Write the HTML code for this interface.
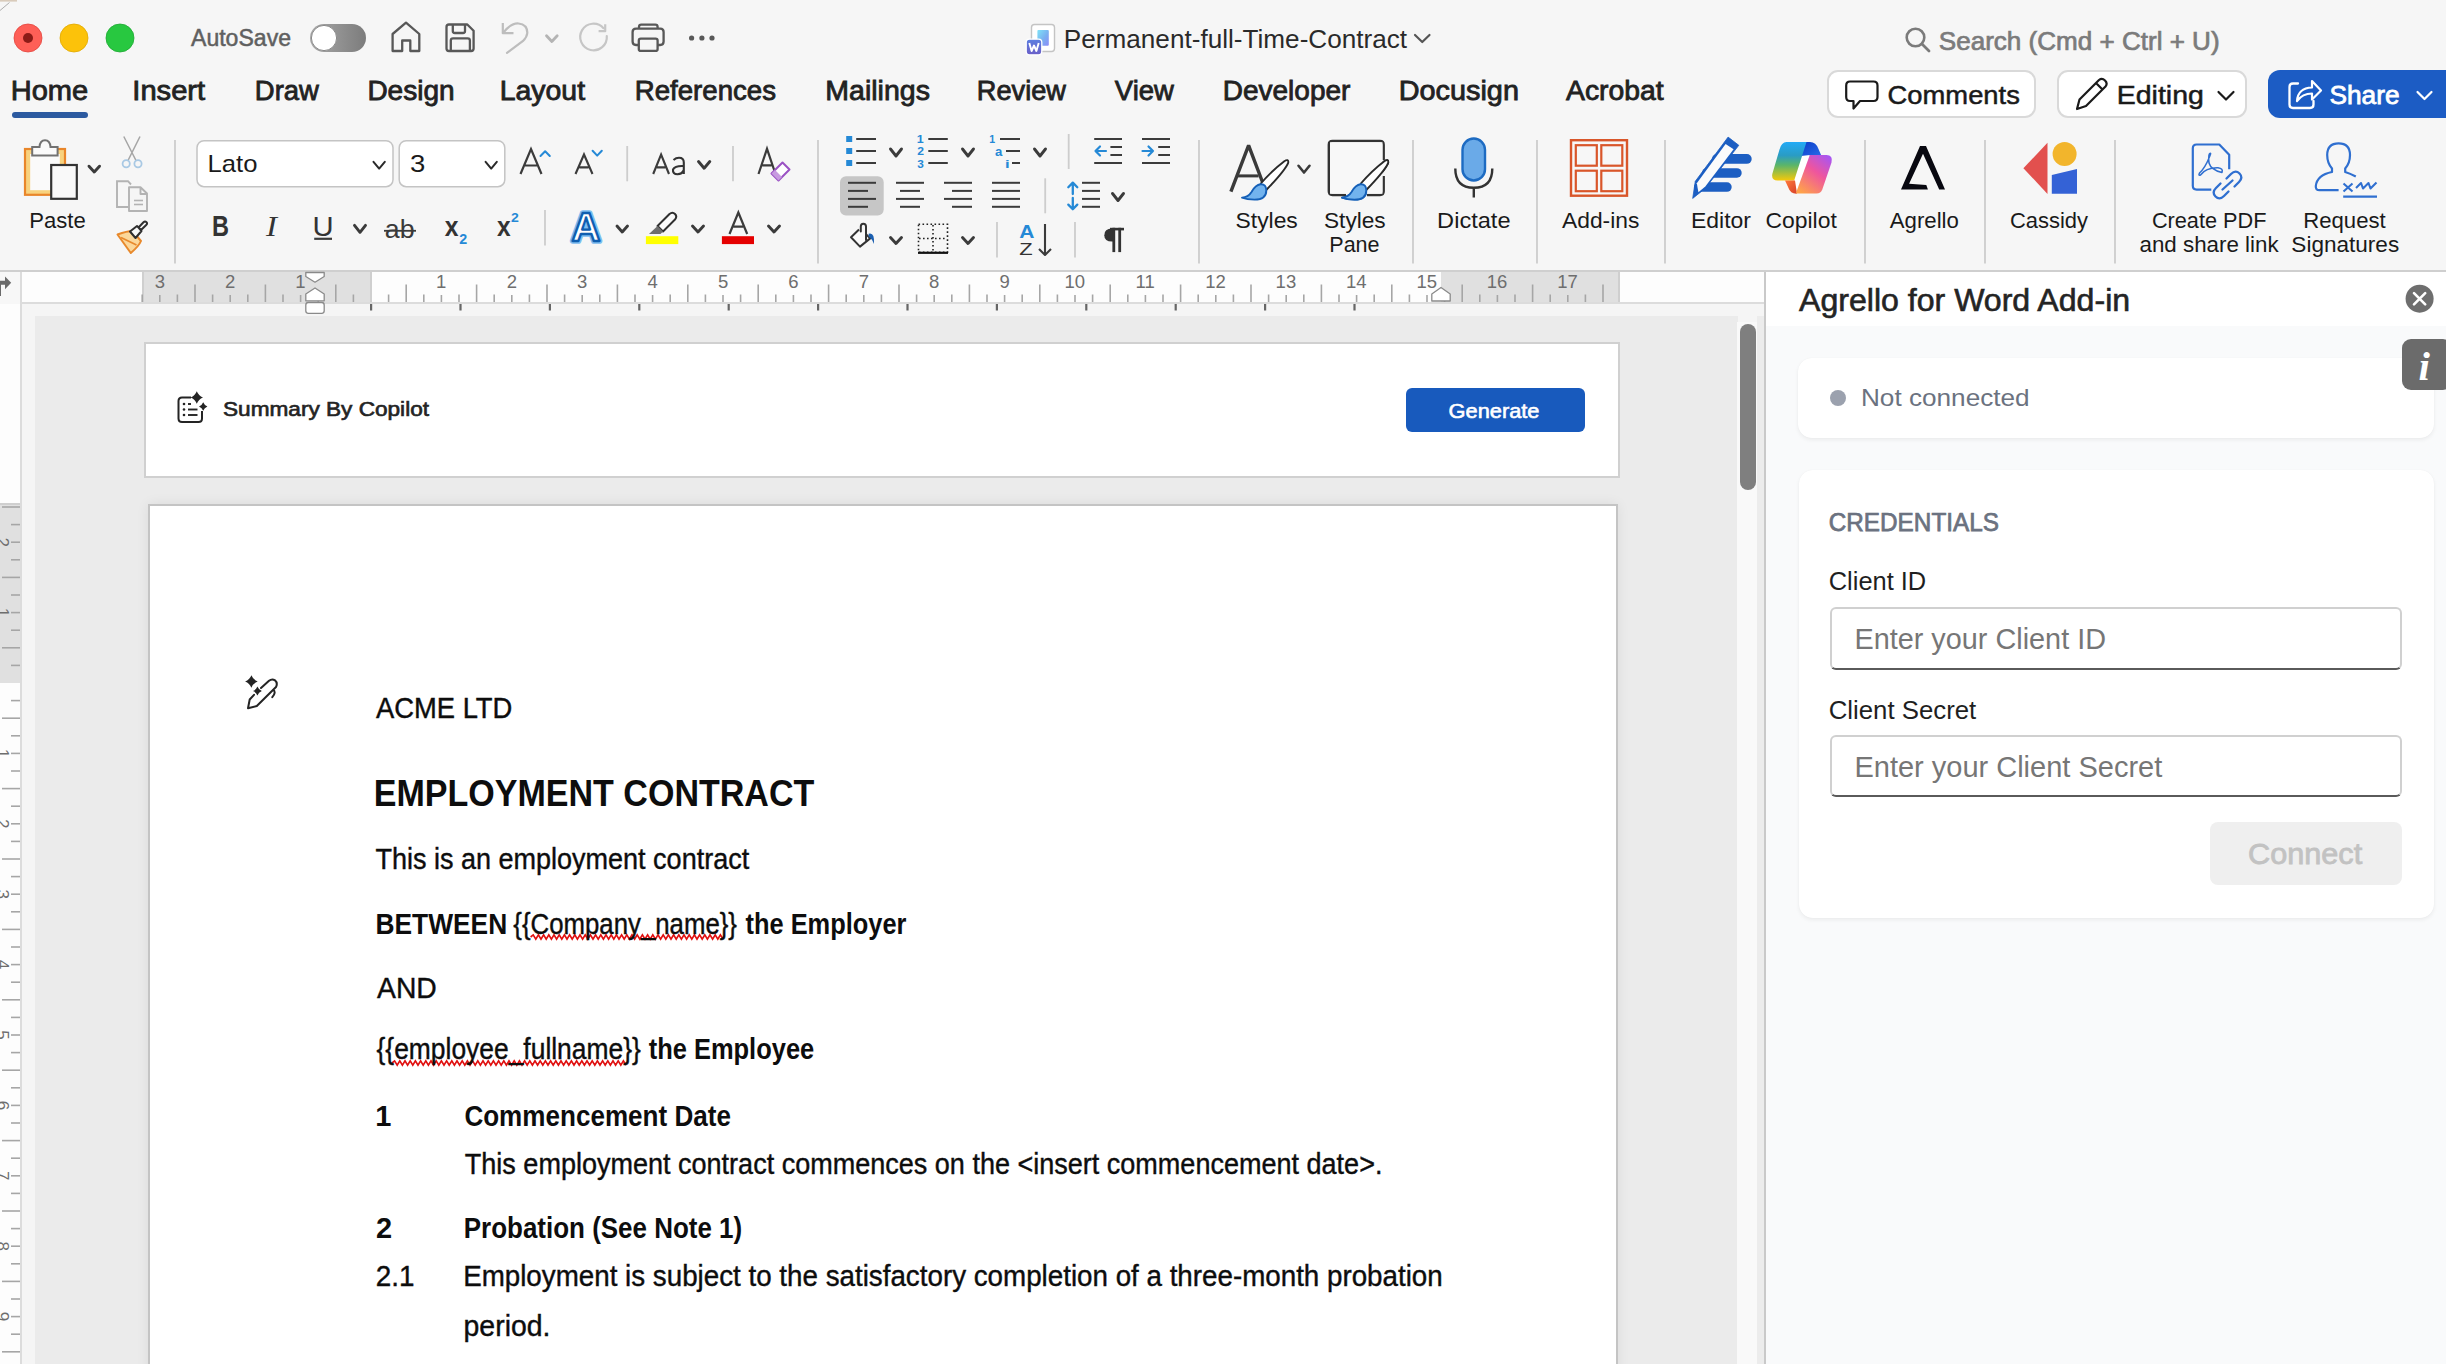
<!DOCTYPE html><html><head><meta charset="utf-8"><style>*{margin:0;padding:0}html,body{width:2446px;height:1364px;overflow:hidden;background:#f5f5f5;font-family:"Liberation Sans",sans-serif}
#w>div{position:absolute}
svg{position:absolute;left:0;top:0}</style></head><body><div id="w"><div style="left:0px;top:0px;width:2446px;height:271px;background:#f6f6f6;"></div><div style="left:0px;top:270px;width:2446px;height:2px;background:#cfcfcf;"></div><div style="left:0px;top:272px;width:20px;height:32px;background:#f7f7f7;"></div><div style="left:20px;top:272px;width:2px;height:1092px;background:#dcdcdc;"></div><div style="left:22px;top:272px;width:1743px;height:31px;background:#fdfdfd;"></div><div style="left:143px;top:272px;width:228px;height:31px;background:#e0e0e0;"></div><div style="left:142px;top:272px;width:2px;height:31px;background:#cfcfcf;"></div><div style="left:370px;top:272px;width:2px;height:31px;background:#cfcfcf;"></div><div style="left:1441px;top:272px;width:178px;height:31px;background:#e0e0e0;"></div><div style="left:1618px;top:272px;width:2px;height:31px;background:#cfcfcf;"></div><div style="left:22px;top:302px;width:1743px;height:2px;background:#dcdcdc;"></div><div style="left:22px;top:304px;width:1743px;height:12px;background:#f5f5f5;"></div><div style="left:0px;top:304px;width:20px;height:1060px;background:#fdfdfd;"></div><div style="left:0px;top:504px;width:20px;height:179px;background:#e0e0e0;"></div><div style="left:0px;top:503px;width:20px;height:2px;background:#cfcfcf;"></div><div style="left:22px;top:316px;width:13px;height:1048px;background:#f5f5f5;"></div><div style="left:35px;top:316px;width:1703px;height:1048px;background:#ebebeb;"></div><div style="left:1737px;top:322px;width:19.5px;height:1042px;background:#f9f9f9;"></div><div style="left:1756.5px;top:316px;width:7.5px;height:1048px;background:#ececec;"></div><div style="left:1764px;top:272px;width:2px;height:1092px;background:#c9c9c9;"></div><div style="left:1740px;top:324px;width:16px;height:166px;background:#7f7f7f;border-radius:8px;"></div><div style="left:144px;top:342px;width:1476px;height:136px;background:#ffffff;border:2px solid #d0d0d0;box-sizing:border-box;"></div><div style="left:148px;top:504px;width:1470px;height:900px;background:#ffffff;border:2px solid #c4c4c4;box-sizing:border-box;box-shadow:0 0 12px rgba(0,0,0,0.07);"></div><div style="left:1766px;top:272px;width:680px;height:54px;background:#ffffff;"></div><div style="left:1766px;top:326px;width:680px;height:1038px;background:#f9fafb;"></div><div style="left:1798px;top:358px;width:636px;height:80px;background:#ffffff;border-radius:14px;box-shadow:0 2px 4px rgba(0,0,0,0.06),0 0 1px rgba(0,0,0,0.05);"></div><div style="left:1799px;top:470px;width:635px;height:448px;background:#ffffff;border-radius:14px;box-shadow:0 2px 4px rgba(0,0,0,0.06),0 0 1px rgba(0,0,0,0.05);"></div><div style="left:1830px;top:606.5px;width:571.5px;height:63px;background:#ffffff;border:2px solid #d0d0d0;border-bottom-color:#5a5a5a;border-radius:6px;box-sizing:border-box;"></div><div style="left:1830px;top:734.6px;width:571.5px;height:62.5px;background:#ffffff;border:2px solid #d0d0d0;border-bottom-color:#5a5a5a;border-radius:6px;box-sizing:border-box;"></div><div style="left:2210px;top:822.3px;width:191.5px;height:63px;background:#efefef;border-radius:8px;"></div><div style="left:2402px;top:338.5px;width:50px;height:51px;background:#6b6b6b;border-radius:9px;"></div><div style="left:1826.5px;top:70px;width:209px;height:47.5px;background:#ffffff;border:2px solid #d9d9d9;border-radius:11px;box-sizing:border-box;"></div><div style="left:2057px;top:70px;width:190px;height:47.5px;background:#ffffff;border:2px solid #d9d9d9;border-radius:11px;box-sizing:border-box;"></div><div style="left:2268px;top:69.5px;width:190px;height:48.5px;background:#1c5cc4;border-radius:12px;"></div><div style="left:12px;top:112px;width:76px;height:6px;background:#2c5aa0;border-radius:3px;"></div><div style="left:1406px;top:388px;width:179px;height:44px;background:#185abd;border-radius:6px;"></div></div><svg width="2446" height="1364" viewBox="0 0 2446 1364" font-family="Liberation Sans, sans-serif"><path d="M0 0.8 L17 0.8" stroke="#d9cbbb" stroke-width="1.6"/><path d="M0 10.5 L9.5 2.5" stroke="#9a9a9a" stroke-width="0.8"/><circle cx="28" cy="38" r="14" fill="#fe5f57" stroke="#e2463f" stroke-width="0.8"/><circle cx="28" cy="38" r="5" fill="#8c1b17"/><circle cx="74" cy="38" r="14" fill="#fcc20a" stroke="#e0a800" stroke-width="0.8"/><circle cx="120" cy="38" r="14" fill="#28c840" stroke="#1fa833" stroke-width="0.8"/><defs><linearGradient id="tg" x1="0" x2="1" y1="0" y2="0"><stop offset="0" stop-color="#a8a8a8"/><stop offset="1" stop-color="#7c7c7c"/></linearGradient></defs><rect x="310" y="24" width="56" height="28" rx="14" fill="url(#tg)"/><circle cx="324" cy="38" r="12.6" fill="#ffffff" stroke="#8a8a8a" stroke-width="1"/><path d="M392.6 51 L392.6 34 L406 22.6 L419.3 34 L419.3 51 L410.3 51 L410.3 40.5 L402.2 40.5 L402.2 51 Z" fill="none" stroke="#585858" stroke-width="2.3" stroke-linejoin="round"/><path d="M449 24.5 L467.3 24.5 L473.6 30.8 L473.6 48.5 Q473.6 51 471 51 L449 51 Q446.5 51 446.5 48.5 L446.5 27 Q446.5 24.5 449 24.5 Z" fill="none" stroke="#585858" stroke-width="2.3" stroke-linejoin="round"/><path d="M452.8 24.5 L452.8 31 Q452.8 33 454.8 33 L463 33 Q465 33 465 31 L465 24.5" fill="none" stroke="#585858" stroke-width="2.3"/><path d="M450.8 51 L450.8 40.5 Q450.8 38.3 453 38.3 L467.7 38.3 Q469.9 38.3 469.9 40.5 L469.9 51" fill="none" stroke="#585858" stroke-width="2.3"/><path d="M502.8 23 L502.8 33.2 L513.5 33.2" fill="none" stroke="#bdbdbd" stroke-width="2.2" stroke-linejoin="round"/><path d="M503.5 32.5 Q511 23 518.5 23.5 Q527.5 24.5 527.3 33 Q527 37 523 41 L507 52.8" fill="none" stroke="#bdbdbd" stroke-width="2.2" stroke-linecap="round"/><path d="M546.5 35.8 L551.85 41.5 L557.2 35.8" fill="none" stroke="#b4b4b4" stroke-width="2.8" stroke-linecap="round" stroke-linejoin="round"/><path d="M603.5 28.2 A13.3 13.3 0 1 0 606.8 36" fill="none" stroke="#c6c6c6" stroke-width="2.2" stroke-linecap="round"/><path d="M605.2 24.3 L605.2 31.2 L598.6 31.2" fill="none" stroke="#c6c6c6" stroke-width="2.2" stroke-linejoin="round"/><path d="M639 28.4 L639 27 Q639 24.7 641.3 24.7 L655.3 24.7 Q657.6 24.7 657.6 27 L657.6 28.4" fill="none" stroke="#585858" stroke-width="2.3"/><path d="M638.8 45 L636 45 Q632.6 45 632.6 41.6 L632.6 32 Q632.6 28.6 636 28.6 L660.2 28.6 Q663.6 28.6 663.6 32 L663.6 41.6 Q663.6 45 660.2 45 L657.5 45" fill="none" stroke="#585858" stroke-width="2.3"/><rect x="638.8" y="38.6" width="18.8" height="12.3" rx="2" fill="none" stroke="#585858" stroke-width="2.3"/><circle cx="691.6" cy="38" r="2.6" fill="#585858"/><circle cx="701.9" cy="38" r="2.6" fill="#585858"/><circle cx="712" cy="38" r="2.6" fill="#585858"/><defs><linearGradient id="wd" x1="0" x2="1" y1="0" y2="1"><stop offset="0" stop-color="#7fe3f8"/><stop offset="0.55" stop-color="#7ab0f0"/><stop offset="1" stop-color="#8c8cf8"/></linearGradient><linearGradient id="wb" x1="0" x2="0" y1="0" y2="1"><stop offset="0" stop-color="#5d7fe0"/><stop offset="1" stop-color="#6a5fc8"/></linearGradient></defs><rect x="1031.5" y="24.5" width="23" height="27" rx="3" fill="#ffffff" stroke="#c4c4c4" stroke-width="1.4"/><rect x="1037.4" y="30" width="11.4" height="15.8" rx="1" fill="url(#wd)"/><rect x="1026.2" y="39.2" width="15.6" height="15.6" rx="3.2" fill="url(#wb)" stroke="#ffffff" stroke-width="1.3"/><path d="M1029.3 43 L1031.6 51 L1034 45.5 L1036.4 51 L1038.7 43" fill="none" stroke="#fff" stroke-width="1.9" stroke-linejoin="round"/><path d="M1415 35 L1422.25 42 L1429.5 35" fill="none" stroke="#555" stroke-width="2.2" stroke-linecap="round" stroke-linejoin="round"/><circle cx="1915.5" cy="37.5" r="8.8" fill="none" stroke="#7b7b7b" stroke-width="2.6"/><line x1="1922" y1="44" x2="1929" y2="51" stroke="#7b7b7b" stroke-width="2.8" stroke-linecap="round"/><path d="M1850 81.5 L1873.5 81.5 Q1877.5 81.5 1877.5 85.5 L1877.5 97 Q1877.5 101 1873.5 101 L1860 101 L1853.5 108.5 L1853.5 101 L1850 101 Q1846.2 101 1846.2 97 L1846.2 85.5 Q1846.2 81.5 1850 81.5 Z" fill="none" stroke="#1a1a1a" stroke-width="2.2" stroke-linejoin="round"/><path d="M2077 109 L2079.5 99.5 L2099 80 Q2102 77.5 2105 80.5 Q2108 83.5 2105.5 86.5 L2086 106 Z M2096 83 L2102.5 89.5" fill="none" stroke="#1a1a1a" stroke-width="2.2" stroke-linejoin="round"/><path d="M2218.5 92 L2226 99.5 L2233.5 92" fill="none" stroke="#1a1a1a" stroke-width="2.2" stroke-linecap="round" stroke-linejoin="round"/><path d="M2298 83.5 L2293 83.5 Q2289.5 83.5 2289.5 87 L2289.5 104.5 Q2289.5 108 2293 108 L2310 108 Q2313.5 108 2313.5 104.5 L2313.5 101" fill="none" stroke="#fff" stroke-width="2.3" stroke-linecap="round"/><path d="M2297 101 Q2298 88 2312 87.5 L2312 81 L2321 90.5 L2312 99.5 L2312 93.5 Q2302.5 93.5 2297 101 Z" fill="none" stroke="#fff" stroke-width="2.2" stroke-linejoin="round"/><path d="M2417.5 92 L2424.5 99 L2431.5 92" fill="none" stroke="#fff" stroke-width="2.2" stroke-linecap="round" stroke-linejoin="round"/><line x1="175" y1="140" x2="175" y2="263.5" stroke="#cdcdcd" stroke-width="1.8" stroke-linecap="butt"/><line x1="818" y1="140" x2="818" y2="263.5" stroke="#cdcdcd" stroke-width="1.8" stroke-linecap="butt"/><line x1="1199" y1="140" x2="1199" y2="263.5" stroke="#cdcdcd" stroke-width="1.8" stroke-linecap="butt"/><line x1="1413" y1="140" x2="1413" y2="263.5" stroke="#cdcdcd" stroke-width="1.8" stroke-linecap="butt"/><line x1="1537" y1="140" x2="1537" y2="263.5" stroke="#cdcdcd" stroke-width="1.8" stroke-linecap="butt"/><line x1="1665" y1="140" x2="1665" y2="263.5" stroke="#cdcdcd" stroke-width="1.8" stroke-linecap="butt"/><line x1="1865" y1="140" x2="1865" y2="263.5" stroke="#cdcdcd" stroke-width="1.8" stroke-linecap="butt"/><line x1="1985" y1="140" x2="1985" y2="263.5" stroke="#cdcdcd" stroke-width="1.8" stroke-linecap="butt"/><line x1="2115" y1="140" x2="2115" y2="263.5" stroke="#cdcdcd" stroke-width="1.8" stroke-linecap="butt"/><line x1="627.2" y1="146" x2="627.2" y2="181.3" stroke="#cdcdcd" stroke-width="1.8" stroke-linecap="butt"/><line x1="733" y1="146" x2="733" y2="181.3" stroke="#cdcdcd" stroke-width="1.8" stroke-linecap="butt"/><line x1="545" y1="210" x2="545" y2="245.6" stroke="#cdcdcd" stroke-width="1.8" stroke-linecap="butt"/><line x1="1068.7" y1="134" x2="1068.7" y2="169" stroke="#cdcdcd" stroke-width="1.8" stroke-linecap="butt"/><line x1="1045.2" y1="178.3" x2="1045.2" y2="213.3" stroke="#cdcdcd" stroke-width="1.8" stroke-linecap="butt"/><line x1="997" y1="222" x2="997" y2="257.5" stroke="#cdcdcd" stroke-width="1.8" stroke-linecap="butt"/><line x1="1075" y1="222" x2="1075" y2="257.5" stroke="#cdcdcd" stroke-width="1.8" stroke-linecap="butt"/><rect x="25" y="149" width="40" height="45.8" fill="#f8d27e" stroke="#e9862a" stroke-width="2.2"/><rect x="30.2" y="154" width="29.6" height="36.2" fill="#fafafa"/><path d="M32.2 155.5 L32.2 147 L39.5 147 Q40 140.2 45 140.2 Q50 140.2 50.5 147 L57.6 147 L57.6 155.5 Z" fill="#fafafa" stroke="#727272" stroke-width="2"/><rect x="51.2" y="165" width="25.6" height="33.8" fill="#f9f9f9" stroke="#333" stroke-width="2.2"/><path d="M89 166.2 L94.25 172 L99.5 166.2" fill="none" stroke="#3b3b3b" stroke-width="2.9" stroke-linecap="round" stroke-linejoin="round"/><path d="M123.8 136.5 L136 160.5 M140 136.5 L128 160.5" stroke="#a5a5a5" stroke-width="1.5" fill="none"/><circle cx="126.2" cy="163.8" r="3.6" fill="none" stroke="#a9c9e4" stroke-width="1.8"/><circle cx="138" cy="163.8" r="3.6" fill="none" stroke="#a9c9e4" stroke-width="1.8"/><path d="M128.5 207 L117 207 L117 181.2 L128 181.2 L131 184.5" fill="none" stroke="#b3b3b3" stroke-width="1.9"/><path d="M129 211 L129 187.2 L140.5 187.2 L147 193.5 L147 211 Z M140.5 187.5 L140.5 194 L147 194" fill="#f5f5f5" stroke="#b3b3b3" stroke-width="1.9" stroke-linejoin="round"/><line x1="134" y1="200.5" x2="143" y2="200.5" stroke="#b3b3b3" stroke-width="1.6" stroke-linecap="butt"/><line x1="134" y1="204.5" x2="143" y2="204.5" stroke="#b3b3b3" stroke-width="1.6" stroke-linecap="butt"/><path d="M117.5 234.5 Q127 231 132.5 231 L141 241 Q139 246 130.8 253 Z" fill="#fbd79a" stroke="#e8892c" stroke-width="2" stroke-linejoin="round"/><path d="M121 237.5 L136.5 245" stroke="#e8892c" stroke-width="1.6"/><path d="M130 231.5 L137 226 L141 230 L146.2 225 Q147.8 223.6 146.5 222.2 Q145 220.9 143.5 222.3 L138.5 227.5 L141.5 231 L135.5 238 Z" fill="#f8f8f8" stroke="#2f2f2f" stroke-width="2" stroke-linejoin="round"/><rect x="197" y="140.7" width="196" height="46" rx="7" fill="#ffffff" stroke="#c4c4c4" stroke-width="1.5"/><rect x="399.2" y="140.7" width="105.6" height="46" rx="7" fill="#ffffff" stroke="#c4c4c4" stroke-width="1.5"/><path d="M373.5 161.8 L379.15 168.6 L384.8 161.8" fill="none" stroke="#2a2a2a" stroke-width="2" stroke-linecap="round" stroke-linejoin="round"/><path d="M485.6 161.8 L491.20000000000005 168.6 L496.8 161.8" fill="none" stroke="#2a2a2a" stroke-width="2" stroke-linecap="round" stroke-linejoin="round"/><path d="M520.5 174 L531.0 149 L541.5 174 M525.07 165.5 L536.93 165.5" fill="none" stroke="#3b3b3b" stroke-width="2.2" stroke-linejoin="miter"/><path d="M540.5 156 L545.15 151.2 L549.8 156" fill="none" stroke="#2589d6" stroke-width="2" stroke-linecap="round" stroke-linejoin="round"/><path d="M575.5 174 L584.0 154.5 L592.5 174 M579.39 167.37 L588.61 167.37" fill="none" stroke="#3b3b3b" stroke-width="2.1" stroke-linejoin="miter"/><path d="M592.6 150.8 L597.2 155.6 L601.8 150.8" fill="none" stroke="#2589d6" stroke-width="2" stroke-linecap="round" stroke-linejoin="round"/><path d="M653.2 174 L661.1 154.5 L669 174 M656.8860000000001 167.37 L665.314 167.37" fill="none" stroke="#3b3b3b" stroke-width="2.1" stroke-linejoin="miter"/><path d="M673.5 160 Q676 157.8 679 157.8 Q683.8 157.8 683.8 162.5 L683.8 174 M683.8 166 Q675 165.5 673 169.5 Q672.5 174.2 677.5 174.2 Q682 174.2 683.8 170" fill="none" stroke="#333" stroke-width="2.1"/><path d="M698.5 161.5 L704.15 168.2 L709.8 161.5" fill="none" stroke="#3b3b3b" stroke-width="2.9" stroke-linecap="round" stroke-linejoin="round"/><path d="M758.5 174 L767.0 148.8 L775.5 174 M762.39 165.43200000000002 L771.61 165.43200000000002" fill="none" stroke="#3b3b3b" stroke-width="2.2" stroke-linejoin="miter"/><path d="M771.5 173.5 L782.5 162.5 L789.5 169.5 L778.5 180.5 Z" fill="#ffffff" stroke="#9b52c4" stroke-width="2" stroke-linejoin="round"/><path d="M771.5 173.5 L775 170 L782 177 L778.5 180.5 Z" fill="#c79be0"/><line x1="314.2" y1="238.8" x2="332" y2="238.8" stroke="#3b3b3b" stroke-width="2.2" stroke-linecap="butt"/><path d="M354.5 225.3 L360.0 232.3 L365.5 225.3" fill="none" stroke="#3b3b3b" stroke-width="2.9" stroke-linecap="round" stroke-linejoin="round"/><line x1="384" y1="230.8" x2="416" y2="230.8" stroke="#3b3b3b" stroke-width="1.8" stroke-linecap="butt"/><text x="571.6" y="241.2" font-size="40" font-weight="bold" fill="#ffffff" stroke="#7dbdf0" stroke-width="5.6" stroke-linejoin="round" paint-order="stroke" textLength="29" lengthAdjust="spacingAndGlyphs">A</text><text x="571.6" y="241.2" font-size="40" font-weight="bold" fill="#ffffff" stroke="#0f5eb0" stroke-width="2.3" stroke-linejoin="round" textLength="29" lengthAdjust="spacingAndGlyphs">A</text><path d="M617 226 L622.25 232 L627.5 226" fill="none" stroke="#3b3b3b" stroke-width="2.9" stroke-linecap="round" stroke-linejoin="round"/><path d="M657.5 226 L669.5 214 Q672.5 211.5 675 214 Q677.5 216.5 675 219.5 L663 231.5 Z" fill="#fafafa" stroke="#2f2f2f" stroke-width="2" stroke-linejoin="round"/><path d="M657.5 226 L663 231.5 L660.5 234 L649 234 Z" fill="#6e6e6e"/><rect x="645.9" y="236.2" width="32.4" height="7.9" fill="#ffff00"/><path d="M692.5 226 L698.0 232 L703.5 226" fill="none" stroke="#3b3b3b" stroke-width="2.9" stroke-linecap="round" stroke-linejoin="round"/><path d="M729.5 234 L738.35 212.5 L747.2 234 M733.509 226.69 L743.191 226.69" fill="none" stroke="#3b3b3b" stroke-width="2.2" stroke-linejoin="miter"/><rect x="721.9" y="236.2" width="32.1" height="7.9" fill="#e50000"/><path d="M768.5 226 L774.0 232 L779.5 226" fill="none" stroke="#3b3b3b" stroke-width="2.9" stroke-linecap="round" stroke-linejoin="round"/><rect x="846.2" y="136" width="6" height="6" fill="#2589d6"/><line x1="856.2" y1="139" x2="876" y2="139" stroke="#3b3b3b" stroke-width="2" stroke-linecap="butt"/><rect x="846.2" y="148" width="6" height="6" fill="#2589d6"/><line x1="856.2" y1="151" x2="876" y2="151" stroke="#3b3b3b" stroke-width="2" stroke-linecap="butt"/><rect x="846.2" y="160" width="6" height="6" fill="#2589d6"/><line x1="856.2" y1="163" x2="876" y2="163" stroke="#3b3b3b" stroke-width="2" stroke-linecap="butt"/><path d="M890.5 149 L896.0 156 L901.5 149" fill="none" stroke="#3b3b3b" stroke-width="2.9" stroke-linecap="round" stroke-linejoin="round"/><line x1="928.3" y1="139" x2="947.8" y2="139" stroke="#3b3b3b" stroke-width="2" stroke-linecap="butt"/><line x1="928.3" y1="151" x2="947.8" y2="151" stroke="#3b3b3b" stroke-width="2" stroke-linecap="butt"/><line x1="928.3" y1="163" x2="947.8" y2="163" stroke="#3b3b3b" stroke-width="2" stroke-linecap="butt"/><path d="M962.5 149 L968.0 156 L973.5 149" fill="none" stroke="#3b3b3b" stroke-width="2.9" stroke-linecap="round" stroke-linejoin="round"/><line x1="1000" y1="139" x2="1020" y2="139" stroke="#3b3b3b" stroke-width="2" stroke-linecap="butt"/><line x1="1006" y1="151" x2="1020" y2="151" stroke="#3b3b3b" stroke-width="2" stroke-linecap="butt"/><line x1="1012" y1="163" x2="1020" y2="163" stroke="#3b3b3b" stroke-width="2" stroke-linecap="butt"/><path d="M1034.5 149 L1040.0 156 L1045.5 149" fill="none" stroke="#3b3b3b" stroke-width="2.9" stroke-linecap="round" stroke-linejoin="round"/><line x1="1094.2" y1="139" x2="1122" y2="139" stroke="#3b3b3b" stroke-width="2" stroke-linecap="butt"/><line x1="1110.4" y1="147" x2="1122" y2="147" stroke="#3b3b3b" stroke-width="2" stroke-linecap="butt"/><line x1="1110.4" y1="155" x2="1122" y2="155" stroke="#3b3b3b" stroke-width="2" stroke-linecap="butt"/><line x1="1094.2" y1="163" x2="1122" y2="163" stroke="#3b3b3b" stroke-width="2" stroke-linecap="butt"/><path d="M1106 151 L1095.5 151 M1100 146.5 L1095.5 151 L1100 155.5" fill="none" stroke="#2589d6" stroke-width="2.2" stroke-linecap="round" stroke-linejoin="round"/><line x1="1142" y1="139" x2="1170" y2="139" stroke="#3b3b3b" stroke-width="2" stroke-linecap="butt"/><line x1="1158.2" y1="147" x2="1170" y2="147" stroke="#3b3b3b" stroke-width="2" stroke-linecap="butt"/><line x1="1158.2" y1="155" x2="1170" y2="155" stroke="#3b3b3b" stroke-width="2" stroke-linecap="butt"/><line x1="1142" y1="163" x2="1170" y2="163" stroke="#3b3b3b" stroke-width="2" stroke-linecap="butt"/><path d="M1142.5 151 L1153 151 M1148.5 146.5 L1153 151 L1148.5 155.5" fill="none" stroke="#2589d6" stroke-width="2.2" stroke-linecap="round" stroke-linejoin="round"/><rect x="840" y="176.2" width="43.7" height="39.3" rx="6" fill="#c6c6c6"/><line x1="848" y1="182.8" x2="876" y2="182.8" stroke="#3b3b3b" stroke-width="2" stroke-linecap="butt"/><line x1="848" y1="190.9" x2="868" y2="190.9" stroke="#3b3b3b" stroke-width="2" stroke-linecap="butt"/><line x1="848" y1="198.9" x2="876" y2="198.9" stroke="#3b3b3b" stroke-width="2" stroke-linecap="butt"/><line x1="848" y1="206.8" x2="868" y2="206.8" stroke="#3b3b3b" stroke-width="2" stroke-linecap="butt"/><line x1="896" y1="182.8" x2="924" y2="182.8" stroke="#3b3b3b" stroke-width="2" stroke-linecap="butt"/><line x1="900" y1="190.9" x2="920" y2="190.9" stroke="#3b3b3b" stroke-width="2" stroke-linecap="butt"/><line x1="896" y1="198.9" x2="924" y2="198.9" stroke="#3b3b3b" stroke-width="2" stroke-linecap="butt"/><line x1="900" y1="206.8" x2="920" y2="206.8" stroke="#3b3b3b" stroke-width="2" stroke-linecap="butt"/><line x1="944" y1="182.8" x2="972" y2="182.8" stroke="#3b3b3b" stroke-width="2" stroke-linecap="butt"/><line x1="952" y1="190.9" x2="972" y2="190.9" stroke="#3b3b3b" stroke-width="2" stroke-linecap="butt"/><line x1="944" y1="198.9" x2="972" y2="198.9" stroke="#3b3b3b" stroke-width="2" stroke-linecap="butt"/><line x1="952" y1="206.8" x2="972" y2="206.8" stroke="#3b3b3b" stroke-width="2" stroke-linecap="butt"/><line x1="992" y1="182.8" x2="1020" y2="182.8" stroke="#3b3b3b" stroke-width="2" stroke-linecap="butt"/><line x1="992" y1="190.9" x2="1020" y2="190.9" stroke="#3b3b3b" stroke-width="2" stroke-linecap="butt"/><line x1="992" y1="198.9" x2="1020" y2="198.9" stroke="#3b3b3b" stroke-width="2" stroke-linecap="butt"/><line x1="992" y1="206.8" x2="1020" y2="206.8" stroke="#3b3b3b" stroke-width="2" stroke-linecap="butt"/><line x1="1082" y1="182.8" x2="1100" y2="182.8" stroke="#3b3b3b" stroke-width="2" stroke-linecap="butt"/><line x1="1082" y1="190.9" x2="1100" y2="190.9" stroke="#3b3b3b" stroke-width="2" stroke-linecap="butt"/><line x1="1082" y1="198.9" x2="1100" y2="198.9" stroke="#3b3b3b" stroke-width="2" stroke-linecap="butt"/><line x1="1082" y1="206.8" x2="1100" y2="206.8" stroke="#3b3b3b" stroke-width="2" stroke-linecap="butt"/><path d="M1072.8 183 L1072.8 194 M1068.3 187.2 L1072.8 182.6 L1077.3 187.2 M1072.8 198 L1072.8 209 M1068.3 204.6 L1072.8 209.2 L1077.3 204.6" fill="none" stroke="#2589d6" stroke-width="2.3" stroke-linecap="round" stroke-linejoin="round"/><path d="M1112.5 193.5 L1118.0 200.5 L1123.5 193.5" fill="none" stroke="#3b3b3b" stroke-width="2.9" stroke-linecap="round" stroke-linejoin="round"/><path d="M859 229.5 L851 237.2 L860 246.6 L870.2 238.4 L866 234.2" fill="#fafafa" stroke="#333" stroke-width="2" stroke-linejoin="round"/><path d="M866 240 L866 226.6 Q866 223.8 863.3 223.8 Q860.8 223.8 860.8 226.6 L860.8 231.5" fill="none" stroke="#333" stroke-width="2" stroke-linecap="round"/><path d="M868.6 233.8 Q874.8 232 874 244 Q872 239 868.6 236.6 Z" fill="#1b5fb0"/><path d="M890.5 237.5 L896.0 243.5 L901.5 237.5" fill="none" stroke="#3b3b3b" stroke-width="2.9" stroke-linecap="round" stroke-linejoin="round"/><rect x="918.5" y="224.3" width="29" height="28" fill="none" stroke="#222" stroke-width="1.6" stroke-dasharray="1.6 2.4"/><path d="M933 225 L933 252 M919 238.5 L947 238.5" fill="none" stroke="#222" stroke-width="1.6" stroke-dasharray="1.6 2.4"/><line x1="918" y1="252.8" x2="948" y2="252.8" stroke="#111" stroke-width="2.2" stroke-linecap="butt"/><path d="M962.5 237.5 L968.0 243.5 L973.5 237.5" fill="none" stroke="#3b3b3b" stroke-width="2.9" stroke-linecap="round" stroke-linejoin="round"/><path d="M1045 224 L1045 255 M1039 249 L1045 255 L1051 249" fill="none" stroke="#3b3b3b" stroke-width="2.1" stroke-linejoin="round"/><path d="M1230.9 191.6 L1248.6 145.4 L1264 186" fill="none" stroke="#3a3a3a" stroke-width="3.4" stroke-linejoin="bevel"/><line x1="1237" y1="175.9" x2="1258.6" y2="175.9" stroke="#3a3a3a" stroke-width="3" stroke-linecap="butt"/><path d="M1260.4 184 Q1272 170.5 1284.3 161.2 Q1288.8 158.4 1288.2 162.8 Q1285 170.5 1266.2 190" fill="#ffffff" stroke="#2a2a2a" stroke-width="1.9" stroke-linejoin="round"/><path d="M1242 197.6 Q1248 197.5 1251.5 192 Q1255.5 184.8 1260.5 184.2 Q1266.3 183.8 1266.3 190.5 Q1266.3 199.6 1254.5 199.6 Q1247 199.6 1242 197.6 Z" fill="#72b3ee" stroke="#1560b8" stroke-width="1.9" stroke-linejoin="round"/><path d="M1360.4 184 Q1372 170.5 1384.3 161.2 Q1388.8 158.4 1388.2 162.8 Q1385 170.5 1366.2 190" fill="#ffffff" stroke="#2a2a2a" stroke-width="1.9" stroke-linejoin="round"/><path d="M1342 197.6 Q1348 197.5 1351.5 192 Q1355.5 184.8 1360.5 184.2 Q1366.3 183.8 1366.3 190.5 Q1366.3 199.6 1354.5 199.6 Q1347 199.6 1342 197.6 Z" fill="#72b3ee" stroke="#1560b8" stroke-width="1.9" stroke-linejoin="round"/><path d="M1298.5 165.8 L1304.0 172.5 L1309.5 165.8" fill="none" stroke="#3a3a3a" stroke-width="2.6" stroke-linecap="round" stroke-linejoin="round"/><path d="M1346 195 L1332.5 195 Q1328.8 195 1328.8 191.3 L1328.8 144.7 Q1328.8 141 1332.5 141 L1380 141 Q1383.7 141 1383.7 144.7 L1383.7 160 M1383.7 176 L1383.7 191.3 Q1383.7 195 1380 195 L1367 195" fill="none" stroke="#333" stroke-width="2.4"/><rect x="1330" y="142.2" width="52.5" height="51.6" fill="#f8f8f8"/><path d="M1360.4 184 Q1372 170.5 1384.3 161.2 Q1388.8 158.4 1388.2 162.8 Q1385 170.5 1366.2 190" fill="#ffffff" stroke="#2a2a2a" stroke-width="1.9" stroke-linejoin="round"/><path d="M1342 197.6 Q1348 197.5 1351.5 192 Q1355.5 184.8 1360.5 184.2 Q1366.3 183.8 1366.3 190.5 Q1366.3 199.6 1354.5 199.6 Q1347 199.6 1342 197.6 Z" fill="#72b3ee" stroke="#1560b8" stroke-width="1.9" stroke-linejoin="round"/><rect x="1462.5" y="138.5" width="22.5" height="42" rx="11.25" fill="#6aaae8" stroke="#1d6bc2" stroke-width="2.4"/><path d="M1455.3 168.5 Q1455.3 187.8 1473.8 187.8 Q1492.3 187.8 1492.3 168.5 M1473.8 187.8 L1473.8 197.5" fill="none" stroke="#333" stroke-width="2.4"/><rect x="1571" y="140.2" width="56" height="55.5" fill="#f7f7f7" stroke="#d9562a" stroke-width="2.4"/><rect x="1575.8" y="145.2" width="21" height="20.5" fill="none" stroke="#d9562a" stroke-width="2.2"/><rect x="1575.8" y="170.7" width="21" height="20.5" fill="none" stroke="#d9562a" stroke-width="2.2"/><rect x="1601.3" y="145.2" width="21" height="20.5" fill="none" stroke="#d9562a" stroke-width="2.2"/><rect x="1601.3" y="170.7" width="21" height="20.5" fill="none" stroke="#d9562a" stroke-width="2.2"/><rect x="1712" y="154.1" width="39.7" height="9.7" rx="4.85" fill="#1c5ec2"/><rect x="1702" y="168.2" width="39.7" height="9.5" rx="4.75" fill="#1c5ec2"/><rect x="1694" y="182.3" width="37.7" height="9.5" rx="4.75" fill="#1c5ec2"/><path d="M1692.7 198.4 L1695.3 181.3 L1728.1 137.1 L1738.8 145.3 L1705.2 188.4 Z" fill="#1c5ec2" stroke="#1c5ec2" stroke-width="0.8" stroke-linejoin="round"/><path d="M1725.6 143.9 L1733.6 149.3 L1705.3 186.6 L1698.4 192.3 L1696.8 183.2 Z" fill="#fbfbfb"/><defs><linearGradient id="cpl" x1="0" x2="0" y1="0" y2="1"><stop offset="0" stop-color="#22aaf6"/><stop offset="0.35" stop-color="#2a9cc4"/><stop offset="0.6" stop-color="#5ab56a"/><stop offset="1" stop-color="#f5c90a"/></linearGradient><linearGradient id="cpr" x1="0.9" x2="0.2" y1="0" y2="1"><stop offset="0" stop-color="#a655f5"/><stop offset="0.45" stop-color="#ee559e"/><stop offset="1" stop-color="#ffa24a"/></linearGradient><linearGradient id="cpt" x1="0" x2="1" y1="0" y2="1"><stop offset="0" stop-color="#0a3ec8"/><stop offset="1" stop-color="#2a6ae8"/></linearGradient><linearGradient id="cpb" x1="0" x2="1" y1="0" y2="1"><stop offset="0" stop-color="#ff7a3a"/><stop offset="1" stop-color="#d8402a"/></linearGradient></defs><path d="M1804 142 L1810 142 Q1816 142 1818.5 149 L1821.5 156 L1801 156 Z" fill="url(#cpt)"/><path d="M1801 156 L1810 155 L1796.5 193.6 L1793.5 180.5 Z" fill="#ffffff"/><path d="M1786.5 142 L1806.5 142 L1794.2 180.5 L1777.5 180.5 Q1771.2 180.5 1772.3 174 L1779.5 149.5 Q1781.5 142 1786.5 142 Z" fill="url(#cpl)"/><path d="M1785 180.5 L1795 180.5 L1797 193.6 Q1790.5 194 1788.5 188 Z" fill="url(#cpb)"/><path d="M1809.8 155 L1826.5 155 Q1833.2 155 1831.5 162.5 L1822.3 189.5 Q1820.8 193.6 1816.5 193.6 L1795.8 193.6 Z" fill="url(#cpr)"/><path d="M1920 146 L1926 146 L1945 189.4 L1939.2 189.4 L1923 153.7 L1909.1 183.8 L1926.3 185 L1927.9 189.4 L1901 189.4 Z" fill="#080810"/><path d="M2023.4 168.2 L2047.5 142.8 L2047.5 193.9 Z" fill="#e2504e"/><circle cx="2064.6" cy="154" r="12" fill="#f2b52c"/><path d="M2051.8 175 L2077 169 L2077 193.8 L2051.8 193.8 Z" fill="#3462d6"/><path d="M2211.3 189.6 L2196.6 189.6 Q2192.8 189.6 2192.8 185.8 L2192.8 148.3 Q2192.8 144.5 2196.6 144.5 L2219.3 144.5 L2229.2 154.7 L2229.2 169.3" fill="none" stroke="#2f6fd0" stroke-width="2.2" stroke-linejoin="round"/><path d="M2210.5 153.3 Q2208 153.3 2209 163 Q2211 170 2222 172.5 Q2223.5 168.5 2218 167.8 Q2206 167.5 2200.5 175 Q2198 176 2199.5 173 Q2205 168 2209 158 Q2211 153.3 2210.5 153.3 Z" fill="none" stroke="#2f6fd0" stroke-width="1.5" stroke-linejoin="round"/><path d="M2226.5 178.5 L2231 174 Q2235.5 169.5 2239.5 173.5 Q2243.5 177.5 2239 182 L2234.5 186.5" fill="none" stroke="#2f6fd0" stroke-width="2.3" stroke-linecap="round"/><path d="M2228.5 191.5 L2224 196 Q2219.5 200.5 2215.5 196.5 Q2211.5 192.5 2216 188 L2220.5 183.5" fill="none" stroke="#2f6fd0" stroke-width="2.3" stroke-linecap="round"/><path d="M2222.5 189.5 L2232.5 180.5" fill="none" stroke="#2f6fd0" stroke-width="2.3" stroke-linecap="round"/><path d="M2338.6 190.2 L2319.5 190.2 Q2315.5 190.2 2315.8 186 Q2317 175 2332 172 L2332 168.5 Q2327.2 163 2327.2 155 Q2327.2 143.3 2338.6 143.3 Q2350 143.3 2350 155 Q2350 163 2345.2 168.5 L2345.2 172 Q2350 173.5 2355.8 176.5" fill="none" stroke="#2f6fd0" stroke-width="2.2" stroke-linejoin="round"/><path d="M2343.5 183.5 L2352.5 191.5 M2352.5 183.5 L2343.5 191.5" stroke="#2f6fd0" stroke-width="2.1"/><path d="M2356 188 L2361 183 L2363 188.5 L2368.5 183 L2370.5 188.5 L2376.5 182.5" fill="none" stroke="#2f6fd0" stroke-width="2.1" stroke-linejoin="round"/><line x1="2343.2" y1="196.6" x2="2377" y2="196.6" stroke="#2f6fd0" stroke-width="2.2" stroke-linecap="butt"/><line x1="142.2" y1="294.5" x2="142.2" y2="302" stroke="#a6a6a6" stroke-width="1.6"/><line x1="177.4" y1="294.5" x2="177.4" y2="302" stroke="#a6a6a6" stroke-width="1.6"/><line x1="195.0" y1="284.5" x2="195.0" y2="302" stroke="#a6a6a6" stroke-width="1.6"/><line x1="212.6" y1="294.5" x2="212.6" y2="302" stroke="#a6a6a6" stroke-width="1.6"/><line x1="247.8" y1="294.5" x2="247.8" y2="302" stroke="#a6a6a6" stroke-width="1.6"/><line x1="265.4" y1="284.5" x2="265.4" y2="302" stroke="#a6a6a6" stroke-width="1.6"/><line x1="283.0" y1="294.5" x2="283.0" y2="302" stroke="#a6a6a6" stroke-width="1.6"/><line x1="318.2" y1="294.5" x2="318.2" y2="302" stroke="#a6a6a6" stroke-width="1.6"/><line x1="335.8" y1="284.5" x2="335.8" y2="302" stroke="#a6a6a6" stroke-width="1.6"/><line x1="353.4" y1="294.5" x2="353.4" y2="302" stroke="#a6a6a6" stroke-width="1.6"/><line x1="388.6" y1="294.5" x2="388.6" y2="302" stroke="#a6a6a6" stroke-width="1.6"/><line x1="406.2" y1="284.5" x2="406.2" y2="302" stroke="#a6a6a6" stroke-width="1.6"/><line x1="423.8" y1="294.5" x2="423.8" y2="302" stroke="#a6a6a6" stroke-width="1.6"/><line x1="459.0" y1="294.5" x2="459.0" y2="302" stroke="#a6a6a6" stroke-width="1.6"/><line x1="476.6" y1="284.5" x2="476.6" y2="302" stroke="#a6a6a6" stroke-width="1.6"/><line x1="494.2" y1="294.5" x2="494.2" y2="302" stroke="#a6a6a6" stroke-width="1.6"/><line x1="529.4" y1="294.5" x2="529.4" y2="302" stroke="#a6a6a6" stroke-width="1.6"/><line x1="547.0" y1="284.5" x2="547.0" y2="302" stroke="#a6a6a6" stroke-width="1.6"/><line x1="564.6" y1="294.5" x2="564.6" y2="302" stroke="#a6a6a6" stroke-width="1.6"/><line x1="599.8" y1="294.5" x2="599.8" y2="302" stroke="#a6a6a6" stroke-width="1.6"/><line x1="617.4" y1="284.5" x2="617.4" y2="302" stroke="#a6a6a6" stroke-width="1.6"/><line x1="635.0" y1="294.5" x2="635.0" y2="302" stroke="#a6a6a6" stroke-width="1.6"/><line x1="670.2" y1="294.5" x2="670.2" y2="302" stroke="#a6a6a6" stroke-width="1.6"/><line x1="687.8" y1="284.5" x2="687.8" y2="302" stroke="#a6a6a6" stroke-width="1.6"/><line x1="705.4" y1="294.5" x2="705.4" y2="302" stroke="#a6a6a6" stroke-width="1.6"/><line x1="740.6" y1="294.5" x2="740.6" y2="302" stroke="#a6a6a6" stroke-width="1.6"/><line x1="758.2" y1="284.5" x2="758.2" y2="302" stroke="#a6a6a6" stroke-width="1.6"/><line x1="775.8" y1="294.5" x2="775.8" y2="302" stroke="#a6a6a6" stroke-width="1.6"/><line x1="811.0" y1="294.5" x2="811.0" y2="302" stroke="#a6a6a6" stroke-width="1.6"/><line x1="828.6" y1="284.5" x2="828.6" y2="302" stroke="#a6a6a6" stroke-width="1.6"/><line x1="846.2" y1="294.5" x2="846.2" y2="302" stroke="#a6a6a6" stroke-width="1.6"/><line x1="881.4" y1="294.5" x2="881.4" y2="302" stroke="#a6a6a6" stroke-width="1.6"/><line x1="899.0" y1="284.5" x2="899.0" y2="302" stroke="#a6a6a6" stroke-width="1.6"/><line x1="916.6" y1="294.5" x2="916.6" y2="302" stroke="#a6a6a6" stroke-width="1.6"/><line x1="951.8" y1="294.5" x2="951.8" y2="302" stroke="#a6a6a6" stroke-width="1.6"/><line x1="969.4" y1="284.5" x2="969.4" y2="302" stroke="#a6a6a6" stroke-width="1.6"/><line x1="987.0" y1="294.5" x2="987.0" y2="302" stroke="#a6a6a6" stroke-width="1.6"/><line x1="1022.2" y1="294.5" x2="1022.2" y2="302" stroke="#a6a6a6" stroke-width="1.6"/><line x1="1039.8" y1="284.5" x2="1039.8" y2="302" stroke="#a6a6a6" stroke-width="1.6"/><line x1="1057.4" y1="294.5" x2="1057.4" y2="302" stroke="#a6a6a6" stroke-width="1.6"/><line x1="1092.6" y1="294.5" x2="1092.6" y2="302" stroke="#a6a6a6" stroke-width="1.6"/><line x1="1110.2" y1="284.5" x2="1110.2" y2="302" stroke="#a6a6a6" stroke-width="1.6"/><line x1="1127.8" y1="294.5" x2="1127.8" y2="302" stroke="#a6a6a6" stroke-width="1.6"/><line x1="1163.0" y1="294.5" x2="1163.0" y2="302" stroke="#a6a6a6" stroke-width="1.6"/><line x1="1180.6" y1="284.5" x2="1180.6" y2="302" stroke="#a6a6a6" stroke-width="1.6"/><line x1="1198.2" y1="294.5" x2="1198.2" y2="302" stroke="#a6a6a6" stroke-width="1.6"/><line x1="1233.4" y1="294.5" x2="1233.4" y2="302" stroke="#a6a6a6" stroke-width="1.6"/><line x1="1251.0" y1="284.5" x2="1251.0" y2="302" stroke="#a6a6a6" stroke-width="1.6"/><line x1="1268.6" y1="294.5" x2="1268.6" y2="302" stroke="#a6a6a6" stroke-width="1.6"/><line x1="1303.8" y1="294.5" x2="1303.8" y2="302" stroke="#a6a6a6" stroke-width="1.6"/><line x1="1321.4" y1="284.5" x2="1321.4" y2="302" stroke="#a6a6a6" stroke-width="1.6"/><line x1="1339.0" y1="294.5" x2="1339.0" y2="302" stroke="#a6a6a6" stroke-width="1.6"/><line x1="1374.2" y1="294.5" x2="1374.2" y2="302" stroke="#a6a6a6" stroke-width="1.6"/><line x1="1391.8" y1="284.5" x2="1391.8" y2="302" stroke="#a6a6a6" stroke-width="1.6"/><line x1="1409.4" y1="294.5" x2="1409.4" y2="302" stroke="#a6a6a6" stroke-width="1.6"/><line x1="1444.6" y1="294.5" x2="1444.6" y2="302" stroke="#a6a6a6" stroke-width="1.6"/><line x1="1462.2" y1="284.5" x2="1462.2" y2="302" stroke="#a6a6a6" stroke-width="1.6"/><line x1="1479.8" y1="294.5" x2="1479.8" y2="302" stroke="#a6a6a6" stroke-width="1.6"/><line x1="1515.0" y1="294.5" x2="1515.0" y2="302" stroke="#a6a6a6" stroke-width="1.6"/><line x1="1532.6" y1="284.5" x2="1532.6" y2="302" stroke="#a6a6a6" stroke-width="1.6"/><line x1="1550.2" y1="294.5" x2="1550.2" y2="302" stroke="#a6a6a6" stroke-width="1.6"/><line x1="1585.4" y1="294.5" x2="1585.4" y2="302" stroke="#a6a6a6" stroke-width="1.6"/><line x1="1603.0" y1="284.5" x2="1603.0" y2="302" stroke="#a6a6a6" stroke-width="1.6"/><line x1="159.8" y1="295" x2="159.8" y2="302" stroke="#a6a6a6" stroke-width="1.6"/><line x1="230.2" y1="295" x2="230.2" y2="302" stroke="#a6a6a6" stroke-width="1.6"/><line x1="300.6" y1="295" x2="300.6" y2="302" stroke="#a6a6a6" stroke-width="1.6"/><line x1="441.4" y1="295" x2="441.4" y2="302" stroke="#a6a6a6" stroke-width="1.6"/><line x1="511.8" y1="295" x2="511.8" y2="302" stroke="#a6a6a6" stroke-width="1.6"/><line x1="582.2" y1="295" x2="582.2" y2="302" stroke="#a6a6a6" stroke-width="1.6"/><line x1="652.6" y1="295" x2="652.6" y2="302" stroke="#a6a6a6" stroke-width="1.6"/><line x1="723.0" y1="295" x2="723.0" y2="302" stroke="#a6a6a6" stroke-width="1.6"/><line x1="793.4" y1="295" x2="793.4" y2="302" stroke="#a6a6a6" stroke-width="1.6"/><line x1="863.8" y1="295" x2="863.8" y2="302" stroke="#a6a6a6" stroke-width="1.6"/><line x1="934.2" y1="295" x2="934.2" y2="302" stroke="#a6a6a6" stroke-width="1.6"/><line x1="1004.6" y1="295" x2="1004.6" y2="302" stroke="#a6a6a6" stroke-width="1.6"/><line x1="1075.0" y1="295" x2="1075.0" y2="302" stroke="#a6a6a6" stroke-width="1.6"/><line x1="1145.4" y1="295" x2="1145.4" y2="302" stroke="#a6a6a6" stroke-width="1.6"/><line x1="1215.8" y1="295" x2="1215.8" y2="302" stroke="#a6a6a6" stroke-width="1.6"/><line x1="1286.2" y1="295" x2="1286.2" y2="302" stroke="#a6a6a6" stroke-width="1.6"/><line x1="1356.6" y1="295" x2="1356.6" y2="302" stroke="#a6a6a6" stroke-width="1.6"/><line x1="1427.0" y1="295" x2="1427.0" y2="302" stroke="#a6a6a6" stroke-width="1.6"/><line x1="1497.4" y1="295" x2="1497.4" y2="302" stroke="#a6a6a6" stroke-width="1.6"/><line x1="1567.8" y1="295" x2="1567.8" y2="302" stroke="#a6a6a6" stroke-width="1.6"/><rect x="370.0" y="304" width="2.2" height="6.5" fill="#666"/><rect x="459.4" y="304" width="2.2" height="6.5" fill="#666"/><rect x="548.8" y="304" width="2.2" height="6.5" fill="#666"/><rect x="638.2" y="304" width="2.2" height="6.5" fill="#666"/><rect x="727.6" y="304" width="2.2" height="6.5" fill="#666"/><rect x="817.0" y="304" width="2.2" height="6.5" fill="#666"/><rect x="906.4" y="304" width="2.2" height="6.5" fill="#666"/><rect x="995.8" y="304" width="2.2" height="6.5" fill="#666"/><rect x="1085.2" y="304" width="2.2" height="6.5" fill="#666"/><rect x="1174.6" y="304" width="2.2" height="6.5" fill="#666"/><rect x="1264.0" y="304" width="2.2" height="6.5" fill="#666"/><rect x="1353.4" y="304" width="2.2" height="6.5" fill="#666"/><path d="M305.8 272.5 L324.2 272.5 L324.2 276.5 L315 282.2 L305.8 276.5 Z" fill="#ffffff" stroke="#8a8a8a" stroke-width="1.3" stroke-linejoin="round"/><path d="M315 288 L324.2 294 L324.2 300.8 L305.8 300.8 L305.8 294 Z" fill="#ffffff" stroke="#8a8a8a" stroke-width="1.3" stroke-linejoin="round"/><rect x="305.8" y="302.5" width="18.4" height="10.8" rx="2.5" fill="#ffffff" stroke="#8a8a8a" stroke-width="1.3" stroke-linejoin="round"/><path d="M1441 287.5 L1450.2 294 L1450.2 301 L1431.8 301 L1431.8 294 Z" fill="#ffffff" stroke="#8a8a8a" stroke-width="1.3" stroke-linejoin="round"/><path d="M-1 296 L-1 282.8 L6 282.8" fill="none" stroke="#6a6a6a" stroke-width="4"/><path d="M5 276.5 L11.2 282.8 L5 289.2 Z" fill="#6a6a6a"/><line x1="2" y1="507.0" x2="20" y2="507.0" stroke="#a6a6a6" stroke-width="1.6"/><line x1="11" y1="524.6" x2="20" y2="524.6" stroke="#a6a6a6" stroke-width="1.6"/><line x1="11" y1="559.8" x2="20" y2="559.8" stroke="#a6a6a6" stroke-width="1.6"/><line x1="2" y1="577.4" x2="20" y2="577.4" stroke="#a6a6a6" stroke-width="1.6"/><line x1="11" y1="595.0" x2="20" y2="595.0" stroke="#a6a6a6" stroke-width="1.6"/><line x1="11" y1="630.2" x2="20" y2="630.2" stroke="#a6a6a6" stroke-width="1.6"/><line x1="2" y1="647.8" x2="20" y2="647.8" stroke="#a6a6a6" stroke-width="1.6"/><line x1="11" y1="665.4" x2="20" y2="665.4" stroke="#a6a6a6" stroke-width="1.6"/><line x1="11" y1="700.6" x2="20" y2="700.6" stroke="#a6a6a6" stroke-width="1.6"/><line x1="2" y1="718.2" x2="20" y2="718.2" stroke="#a6a6a6" stroke-width="1.6"/><line x1="11" y1="735.8" x2="20" y2="735.8" stroke="#a6a6a6" stroke-width="1.6"/><line x1="11" y1="771.0" x2="20" y2="771.0" stroke="#a6a6a6" stroke-width="1.6"/><line x1="2" y1="788.6" x2="20" y2="788.6" stroke="#a6a6a6" stroke-width="1.6"/><line x1="11" y1="806.2" x2="20" y2="806.2" stroke="#a6a6a6" stroke-width="1.6"/><line x1="11" y1="841.4" x2="20" y2="841.4" stroke="#a6a6a6" stroke-width="1.6"/><line x1="2" y1="859.0" x2="20" y2="859.0" stroke="#a6a6a6" stroke-width="1.6"/><line x1="11" y1="876.6" x2="20" y2="876.6" stroke="#a6a6a6" stroke-width="1.6"/><line x1="11" y1="911.8" x2="20" y2="911.8" stroke="#a6a6a6" stroke-width="1.6"/><line x1="2" y1="929.4" x2="20" y2="929.4" stroke="#a6a6a6" stroke-width="1.6"/><line x1="11" y1="947.0" x2="20" y2="947.0" stroke="#a6a6a6" stroke-width="1.6"/><line x1="11" y1="982.2" x2="20" y2="982.2" stroke="#a6a6a6" stroke-width="1.6"/><line x1="2" y1="999.8" x2="20" y2="999.8" stroke="#a6a6a6" stroke-width="1.6"/><line x1="11" y1="1017.4" x2="20" y2="1017.4" stroke="#a6a6a6" stroke-width="1.6"/><line x1="11" y1="1052.6" x2="20" y2="1052.6" stroke="#a6a6a6" stroke-width="1.6"/><line x1="2" y1="1070.2" x2="20" y2="1070.2" stroke="#a6a6a6" stroke-width="1.6"/><line x1="11" y1="1087.8" x2="20" y2="1087.8" stroke="#a6a6a6" stroke-width="1.6"/><line x1="11" y1="1123.0" x2="20" y2="1123.0" stroke="#a6a6a6" stroke-width="1.6"/><line x1="2" y1="1140.6" x2="20" y2="1140.6" stroke="#a6a6a6" stroke-width="1.6"/><line x1="11" y1="1158.2" x2="20" y2="1158.2" stroke="#a6a6a6" stroke-width="1.6"/><line x1="11" y1="1193.4" x2="20" y2="1193.4" stroke="#a6a6a6" stroke-width="1.6"/><line x1="2" y1="1211.0" x2="20" y2="1211.0" stroke="#a6a6a6" stroke-width="1.6"/><line x1="11" y1="1228.6" x2="20" y2="1228.6" stroke="#a6a6a6" stroke-width="1.6"/><line x1="11" y1="1263.8" x2="20" y2="1263.8" stroke="#a6a6a6" stroke-width="1.6"/><line x1="2" y1="1281.4" x2="20" y2="1281.4" stroke="#a6a6a6" stroke-width="1.6"/><line x1="11" y1="1299.0" x2="20" y2="1299.0" stroke="#a6a6a6" stroke-width="1.6"/><line x1="11" y1="1334.2" x2="20" y2="1334.2" stroke="#a6a6a6" stroke-width="1.6"/><line x1="2" y1="1351.8" x2="20" y2="1351.8" stroke="#a6a6a6" stroke-width="1.6"/><line x1="11" y1="542.2" x2="20" y2="542.2" stroke="#a6a6a6" stroke-width="1.6"/><text x="0" y="0" font-size="17" fill="#6e6e6e" text-anchor="middle" transform="translate(-3 542.2) rotate(90)">2</text><line x1="11" y1="612.6" x2="20" y2="612.6" stroke="#a6a6a6" stroke-width="1.6"/><text x="0" y="0" font-size="17" fill="#6e6e6e" text-anchor="middle" transform="translate(-3 612.6) rotate(90)">1</text><line x1="11" y1="753.4" x2="20" y2="753.4" stroke="#a6a6a6" stroke-width="1.6"/><text x="0" y="0" font-size="17" fill="#6e6e6e" text-anchor="middle" transform="translate(-3 753.4) rotate(90)">1</text><line x1="11" y1="823.8" x2="20" y2="823.8" stroke="#a6a6a6" stroke-width="1.6"/><text x="0" y="0" font-size="17" fill="#6e6e6e" text-anchor="middle" transform="translate(-3 823.8) rotate(90)">2</text><line x1="11" y1="894.2" x2="20" y2="894.2" stroke="#a6a6a6" stroke-width="1.6"/><text x="0" y="0" font-size="17" fill="#6e6e6e" text-anchor="middle" transform="translate(-3 894.2) rotate(90)">3</text><line x1="11" y1="964.6" x2="20" y2="964.6" stroke="#a6a6a6" stroke-width="1.6"/><text x="0" y="0" font-size="17" fill="#6e6e6e" text-anchor="middle" transform="translate(-3 964.6) rotate(90)">4</text><line x1="11" y1="1035.0" x2="20" y2="1035.0" stroke="#a6a6a6" stroke-width="1.6"/><text x="0" y="0" font-size="17" fill="#6e6e6e" text-anchor="middle" transform="translate(-3 1035.0) rotate(90)">5</text><line x1="11" y1="1105.4" x2="20" y2="1105.4" stroke="#a6a6a6" stroke-width="1.6"/><text x="0" y="0" font-size="17" fill="#6e6e6e" text-anchor="middle" transform="translate(-3 1105.4) rotate(90)">6</text><line x1="11" y1="1175.8" x2="20" y2="1175.8" stroke="#a6a6a6" stroke-width="1.6"/><text x="0" y="0" font-size="17" fill="#6e6e6e" text-anchor="middle" transform="translate(-3 1175.8) rotate(90)">7</text><line x1="11" y1="1246.2" x2="20" y2="1246.2" stroke="#a6a6a6" stroke-width="1.6"/><text x="0" y="0" font-size="17" fill="#6e6e6e" text-anchor="middle" transform="translate(-3 1246.2) rotate(90)">8</text><line x1="11" y1="1316.6" x2="20" y2="1316.6" stroke="#a6a6a6" stroke-width="1.6"/><text x="0" y="0" font-size="17" fill="#6e6e6e" text-anchor="middle" transform="translate(-3 1316.6) rotate(90)">9</text><path d="M198 397.5 L182 397.5 Q178.5 397.5 178.5 401 L178.5 418.5 Q178.5 422 182 422 L198.5 422 Q202 422 202 418.5 L202 411" fill="none" stroke="#242424" stroke-width="2"/><circle cx="184" cy="404" r="1.3" fill="#242424"/><circle cx="184" cy="409.5" r="1.3" fill="#242424"/><circle cx="184" cy="415" r="1.3" fill="#242424"/><line x1="188" y1="404" x2="195.5" y2="404" stroke="#242424" stroke-width="1.9" stroke-linecap="butt"/><line x1="188" y1="409.5" x2="197.5" y2="409.5" stroke="#242424" stroke-width="1.9" stroke-linecap="butt"/><line x1="188" y1="415" x2="197.5" y2="415" stroke="#242424" stroke-width="1.9" stroke-linecap="butt"/><rect x="191" y="390" width="17" height="18" fill="#ffffff"/><path d="M196.8 391.3 Q198.536 395.764 203.0 397.5 Q198.536 399.236 196.8 403.7 Q195.06400000000002 399.236 190.60000000000002 397.5 Q195.06400000000002 395.764 196.8 391.3 Z" fill="#242424"/><path d="M203.2 402.3 Q204.37599999999998 405.324 207.39999999999998 406.5 Q204.37599999999998 407.676 203.2 410.7 Q202.024 407.676 199.0 406.5 Q202.024 405.324 203.2 402.3 Z" fill="#242424"/><path d="M251.4 675.2 Q253.16400000000002 679.736 257.7 681.5 Q253.16400000000002 683.264 251.4 687.8 Q249.636 683.264 245.1 681.5 Q249.636 679.736 251.4 675.2 Z" fill="#242424"/><path d="M257.4 686.6 Q258.632 689.768 261.79999999999995 691 Q258.632 692.232 257.4 695.4 Q256.16799999999995 692.232 252.99999999999997 691 Q256.16799999999995 689.768 257.4 686.6 Z" fill="#242424"/><path d="M261 688 L269 680.8 Q272 678.3 275 680.3 Q278 683 276 687 L256.8 706 L248 708.2 L249.7 699.5 L254 694.8 M273.2 689.6 Q276.5 692.5 272.3 697.2" fill="none" stroke="#242424" stroke-width="2" stroke-linecap="round" stroke-linejoin="round"/><path d="M530.6 937 L533.2 934.9 L535.8 939.1 L538.4 934.9 L541.0 939.1 L543.6 934.9 L546.2 939.1 L548.8 934.9 L551.4 939.1 L554.0 934.9 L556.6 939.1 L559.2 934.9 L561.8 939.1 L564.4 934.9 L567.0 939.1 L569.6 934.9 L572.2 939.1 L574.8 934.9 L577.4 939.1 L580.0 934.9 L582.6 939.1 L585.2 934.9 L587.8 939.1 L590.4 934.9 L593.0 939.1 L595.6 934.9 L598.2 939.1 L600.8 934.9 L603.4 939.1 L606.0 934.9 L608.6 939.1 L611.2 934.9 L613.8 939.1 L616.4 934.9 L619.0 939.1 L621.6 934.9 L624.2 939.1 L626.8 934.9 L629.4 939.1 L632.0 934.9 L634.6 939.1 L637.2 934.9 L639.8 939.1 L642.4 934.9 L645.0 939.1 L647.6 934.9 L650.2 939.1 L652.8 934.9 L655.4 939.1 L658.0 934.9 L660.6 939.1 L663.2 934.9 L665.8 939.1 L668.4 934.9 L671.0 939.1 L673.6 934.9 L676.2 939.1 L678.8 934.9 L681.4 939.1 L684.0 934.9 L686.6 939.1 L689.2 934.9 L691.8 939.1 L694.4 934.9 L697.0 939.1 L699.6 934.9 L702.2 939.1 L704.8 934.9 L707.4 939.1 L710.0 934.9 L712.6 939.1 L715.2 934.9 L717.8 939.1 L720.4 934.9 L723.0 939.1" fill="none" stroke="#e01010" stroke-width="1.7"/><path d="M392 1063 L394.6 1060.9 L397.2 1065.1 L399.8 1060.9 L402.4 1065.1 L405.0 1060.9 L407.6 1065.1 L410.2 1060.9 L412.8 1065.1 L415.4 1060.9 L418.0 1065.1 L420.6 1060.9 L423.2 1065.1 L425.8 1060.9 L428.4 1065.1 L431.0 1060.9 L433.6 1065.1 L436.2 1060.9 L438.8 1065.1 L441.4 1060.9 L444.0 1065.1 L446.6 1060.9 L449.2 1065.1 L451.8 1060.9 L454.4 1065.1 L457.0 1060.9 L459.6 1065.1 L462.2 1060.9 L464.8 1065.1 L467.4 1060.9 L470.0 1065.1 L472.6 1060.9 L475.2 1065.1 L477.8 1060.9 L480.4 1065.1 L483.0 1060.9 L485.6 1065.1 L488.2 1060.9 L490.8 1065.1 L493.4 1060.9 L496.0 1065.1 L498.6 1060.9 L501.2 1065.1 L503.8 1060.9 L506.4 1065.1 L509.0 1060.9 L511.6 1065.1 L514.2 1060.9 L516.8 1065.1 L519.4 1060.9 L522.0 1065.1 L524.6 1060.9 L527.2 1065.1 L529.8 1060.9 L532.4 1065.1 L535.0 1060.9 L537.6 1065.1 L540.2 1060.9 L542.8 1065.1 L545.4 1060.9 L548.0 1065.1 L550.6 1060.9 L553.2 1065.1 L555.8 1060.9 L558.4 1065.1 L561.0 1060.9 L563.6 1065.1 L566.2 1060.9 L568.8 1065.1 L571.4 1060.9 L574.0 1065.1 L576.6 1060.9 L579.2 1065.1 L581.8 1060.9 L584.4 1065.1 L587.0 1060.9 L589.6 1065.1 L592.2 1060.9 L594.8 1065.1 L597.4 1060.9 L600.0 1065.1 L602.6 1060.9 L605.2 1065.1 L607.8 1060.9 L610.4 1065.1 L613.0 1060.9 L615.6 1065.1 L618.2 1060.9 L620.8 1065.1 L623.4 1060.9 L626.0 1065.1" fill="none" stroke="#e01010" stroke-width="1.7"/><circle cx="2419.6" cy="298.7" r="14" fill="#6e6e6e"/><path d="M2414 293.1 L2425.2 304.3 M2425.2 293.1 L2414 304.3" stroke="#fff" stroke-width="2.6" stroke-linecap="round"/><circle cx="1838" cy="398" r="8" fill="#9ba1ae"/><text x="2418.5" y="379.5" font-family="Liberation Serif, serif" font-weight="bold" font-style="italic" font-size="41" fill="#ffffff">i</text><text x="1887.58" y="103.70" font-size="26.5" font-weight="normal" font-style="normal" fill="#1a1a1a" stroke="#1a1a1a" stroke-width="0.5" textLength="132.31" lengthAdjust="spacingAndGlyphs">Comments</text><text x="2116.71" y="103.70" font-size="26.5" font-weight="normal" font-style="normal" fill="#1a1a1a" stroke="#1a1a1a" stroke-width="0.5" textLength="87.20" lengthAdjust="spacingAndGlyphs">Editing</text><text x="2329.46" y="103.70" font-size="26.5" font-weight="normal" font-style="normal" fill="#ffffff" stroke="#ffffff" stroke-width="0.8" textLength="70.02" lengthAdjust="spacingAndGlyphs">Share</text><text x="29.24" y="227.60" font-size="22" font-weight="normal" font-style="normal" fill="#1a1a1a" textLength="56.47" lengthAdjust="spacingAndGlyphs">Paste</text><text x="1235.56" y="228.00" font-size="22" font-weight="normal" font-style="normal" fill="#1a1a1a" textLength="62.26" lengthAdjust="spacingAndGlyphs">Styles</text><text x="1323.97" y="228.00" font-size="22" font-weight="normal" font-style="normal" fill="#1a1a1a" textLength="61.74" lengthAdjust="spacingAndGlyphs">Styles</text><text x="1329.29" y="252.00" font-size="22" font-weight="normal" font-style="normal" fill="#1a1a1a" textLength="50.30" lengthAdjust="spacingAndGlyphs">Pane</text><text x="1437.12" y="228.00" font-size="22" font-weight="normal" font-style="normal" fill="#1a1a1a" textLength="73.42" lengthAdjust="spacingAndGlyphs">Dictate</text><text x="1562.00" y="228.00" font-size="22" font-weight="normal" font-style="normal" fill="#1a1a1a" textLength="77.35" lengthAdjust="spacingAndGlyphs">Add-ins</text><text x="1690.97" y="228.00" font-size="22" font-weight="normal" font-style="normal" fill="#1a1a1a" textLength="59.99" lengthAdjust="spacingAndGlyphs">Editor</text><text x="1765.53" y="228.00" font-size="22" font-weight="normal" font-style="normal" fill="#1a1a1a" textLength="71.29" lengthAdjust="spacingAndGlyphs">Copilot</text><text x="1889.80" y="228.00" font-size="22" font-weight="normal" font-style="normal" fill="#1a1a1a" textLength="69.07" lengthAdjust="spacingAndGlyphs">Agrello</text><text x="2009.88" y="228.00" font-size="22" font-weight="normal" font-style="normal" fill="#1a1a1a" textLength="78.12" lengthAdjust="spacingAndGlyphs">Cassidy</text><text x="2151.89" y="228.00" font-size="22" font-weight="normal" font-style="normal" fill="#1a1a1a" textLength="114.58" lengthAdjust="spacingAndGlyphs">Create PDF</text><text x="2139.51" y="252.00" font-size="22" font-weight="normal" font-style="normal" fill="#1a1a1a" textLength="139.07" lengthAdjust="spacingAndGlyphs">and share link</text><text x="2303.24" y="228.00" font-size="22" font-weight="normal" font-style="normal" fill="#1a1a1a" textLength="82.43" lengthAdjust="spacingAndGlyphs">Request</text><text x="2291.37" y="252.00" font-size="22" font-weight="normal" font-style="normal" fill="#1a1a1a" textLength="107.85" lengthAdjust="spacingAndGlyphs">Signatures</text><text x="207.50" y="171.70" font-size="24" font-weight="normal" font-style="normal" fill="#1a1a1a" textLength="49.93" lengthAdjust="spacingAndGlyphs">Lato</text><text x="410.00" y="171.70" font-size="24" font-weight="normal" font-style="normal" fill="#1a1a1a" textLength="15.32" lengthAdjust="spacingAndGlyphs">3</text><text x="211.88" y="236.00" font-size="29" font-weight="bold" font-style="normal" fill="#333333" textLength="16.99" lengthAdjust="spacingAndGlyphs">B</text><text x="265.94" y="236.00" font-size="29" font-weight="normal" font-style="italic" font-family="Liberation Serif, serif" fill="#333333" textLength="10.98" lengthAdjust="spacingAndGlyphs">I</text><text x="312.58" y="236.00" font-size="28" font-weight="normal" font-style="normal" fill="#333333" textLength="21.11" lengthAdjust="spacingAndGlyphs">U</text><text x="384.84" y="237.50" font-size="26" font-weight="normal" font-style="normal" fill="#3a3a3a" textLength="29.73" lengthAdjust="spacingAndGlyphs">ab</text><text x="444.77" y="236.00" font-size="27" font-weight="bold" font-style="normal" fill="#333333" textLength="13.77" lengthAdjust="spacingAndGlyphs">x</text><text x="459.22" y="244.00" font-size="15" font-weight="bold" font-style="normal" fill="#2589d6" textLength="7.94" lengthAdjust="spacingAndGlyphs">2</text><text x="496.97" y="236.00" font-size="27" font-weight="bold" font-style="normal" fill="#333333" textLength="13.67" lengthAdjust="spacingAndGlyphs">x</text><text x="511.01" y="221.70" font-size="13.5" font-weight="bold" font-style="normal" fill="#2589d6" textLength="7.82" lengthAdjust="spacingAndGlyphs">2</text><text x="916.82" y="143.00" font-size="10" font-weight="bold" font-style="normal" fill="#2589d6" textLength="6.91" lengthAdjust="spacingAndGlyphs">1</text><text x="917.15" y="155.00" font-size="10" font-weight="bold" font-style="normal" fill="#2589d6" textLength="6.73" lengthAdjust="spacingAndGlyphs">2</text><text x="917.31" y="167.50" font-size="10" font-weight="bold" font-style="normal" fill="#2589d6" textLength="6.56" lengthAdjust="spacingAndGlyphs">3</text><text x="989.34" y="143.00" font-size="10" font-weight="bold" font-style="normal" fill="#2589d6" textLength="5.86" lengthAdjust="spacingAndGlyphs">1</text><text x="995.09" y="155.50" font-size="12" font-weight="bold" font-style="normal" fill="#2589d6" textLength="7.33" lengthAdjust="spacingAndGlyphs">a</text><text x="1004.96" y="167.50" font-size="10" font-weight="bold" font-style="normal" fill="#2589d6" textLength="4.63" lengthAdjust="spacingAndGlyphs">i</text><text x="1019.32" y="237.60" font-size="18" font-weight="bold" font-style="normal" fill="#2589d6" textLength="15.17" lengthAdjust="spacingAndGlyphs">A</text><text x="1019.25" y="255.30" font-size="17" font-weight="normal" font-style="normal" fill="#333333" textLength="13.40" lengthAdjust="spacingAndGlyphs">Z</text><path d="M1114.5 228.6 L1112 228.6 Q1104.3 228.6 1104.3 235.2 Q1104.3 241.6 1112 241.6 L1114.5 241.6 Z" fill="#333"/><rect x="1112.4" y="227.8" width="2.8" height="24.3" fill="#333"/><rect x="1118.3" y="227.8" width="2.8" height="24.3" fill="#333"/><rect x="1110" y="227.8" width="14" height="2.6" fill="#333"/><text x="295.2" y="287.6" font-size="18.5" fill="#6e6e6e">1</text><text x="225.1" y="287.6" font-size="18.5" fill="#6e6e6e">2</text><text x="154.7" y="287.6" font-size="18.5" fill="#6e6e6e">3</text><text x="436.0" y="287.6" font-size="18.5" fill="#6e6e6e">1</text><text x="506.7" y="287.6" font-size="18.5" fill="#6e6e6e">2</text><text x="577.1" y="287.6" font-size="18.5" fill="#6e6e6e">3</text><text x="647.5" y="287.6" font-size="18.5" fill="#6e6e6e">4</text><text x="717.9" y="287.6" font-size="18.5" fill="#6e6e6e">5</text><text x="788.2" y="287.6" font-size="18.5" fill="#6e6e6e">6</text><text x="858.7" y="287.6" font-size="18.5" fill="#6e6e6e">7</text><text x="929.1" y="287.6" font-size="18.5" fill="#6e6e6e">8</text><text x="999.4" y="287.6" font-size="18.5" fill="#6e6e6e">9</text><text x="1064.4" y="287.6" font-size="18.5" fill="#6e6e6e">10</text><text x="1135.6" y="287.6" font-size="18.5" fill="#6e6e6e">11</text><text x="1205.3" y="287.6" font-size="18.5" fill="#6e6e6e">12</text><text x="1275.6" y="287.6" font-size="18.5" fill="#6e6e6e">13</text><text x="1345.9" y="287.6" font-size="18.5" fill="#6e6e6e">14</text><text x="1416.4" y="287.6" font-size="18.5" fill="#6e6e6e">15</text><text x="1486.8" y="287.6" font-size="18.5" fill="#6e6e6e">16</text><text x="1557.3" y="287.6" font-size="18.5" fill="#6e6e6e">17</text><text x="191.00" y="46.00" font-size="23" font-weight="normal" font-style="normal" fill="#606060" stroke="#606060" stroke-width="0.5" textLength="99.99" lengthAdjust="spacingAndGlyphs">AutoSave</text><text x="1063.86" y="47.50" font-size="26" font-weight="normal" font-style="normal" fill="#2a2a2a" textLength="343.25" lengthAdjust="spacingAndGlyphs">Permanent-full-Time-Contract</text><text x="1938.83" y="50.00" font-size="25" font-weight="normal" font-style="normal" fill="#7b7b7b" stroke="#7b7b7b" stroke-width="0.7" textLength="280.75" lengthAdjust="spacingAndGlyphs">Search (Cmd + Ctrl + U)</text><text x="10.71" y="100.00" font-size="27" font-weight="normal" font-style="normal" fill="#222222" stroke="#222222" stroke-width="0.8" textLength="77.52" lengthAdjust="spacingAndGlyphs">Home</text><text x="132.30" y="100.00" font-size="27" font-weight="normal" font-style="normal" fill="#222222" stroke="#222222" stroke-width="0.8" textLength="72.86" lengthAdjust="spacingAndGlyphs">Insert</text><text x="254.84" y="100.00" font-size="27" font-weight="normal" font-style="normal" fill="#222222" stroke="#222222" stroke-width="0.8" textLength="64.04" lengthAdjust="spacingAndGlyphs">Draw</text><text x="367.40" y="100.00" font-size="27" font-weight="normal" font-style="normal" fill="#222222" stroke="#222222" stroke-width="0.8" textLength="87.16" lengthAdjust="spacingAndGlyphs">Design</text><text x="499.76" y="100.00" font-size="27" font-weight="normal" font-style="normal" fill="#222222" stroke="#222222" stroke-width="0.8" textLength="85.30" lengthAdjust="spacingAndGlyphs">Layout</text><text x="634.83" y="100.00" font-size="27" font-weight="normal" font-style="normal" fill="#222222" stroke="#222222" stroke-width="0.8" textLength="141.14" lengthAdjust="spacingAndGlyphs">References</text><text x="825.36" y="100.00" font-size="27" font-weight="normal" font-style="normal" fill="#222222" stroke="#222222" stroke-width="0.8" textLength="104.53" lengthAdjust="spacingAndGlyphs">Mailings</text><text x="976.86" y="100.00" font-size="27" font-weight="normal" font-style="normal" fill="#222222" stroke="#222222" stroke-width="0.8" textLength="89.04" lengthAdjust="spacingAndGlyphs">Review</text><text x="1114.87" y="100.00" font-size="27" font-weight="normal" font-style="normal" fill="#222222" stroke="#222222" stroke-width="0.8" textLength="59.03" lengthAdjust="spacingAndGlyphs">View</text><text x="1222.80" y="100.00" font-size="27" font-weight="normal" font-style="normal" fill="#222222" stroke="#222222" stroke-width="0.8" textLength="127.53" lengthAdjust="spacingAndGlyphs">Developer</text><text x="1398.73" y="100.00" font-size="27" font-weight="normal" font-style="normal" fill="#222222" stroke="#222222" stroke-width="0.8" textLength="120.20" lengthAdjust="spacingAndGlyphs">Docusign</text><text x="1566.00" y="100.00" font-size="27" font-weight="normal" font-style="normal" fill="#222222" stroke="#222222" stroke-width="0.8" textLength="97.68" lengthAdjust="spacingAndGlyphs">Acrobat</text><text x="376.00" y="718.00" font-size="29" font-weight="normal" font-style="normal" fill="#0d0d0d" stroke="#0d0d0d" stroke-width="0.4" textLength="136.28" lengthAdjust="spacingAndGlyphs">ACME LTD</text><text x="373.75" y="806.00" font-size="36" font-weight="bold" font-style="normal" fill="#0d0d0d" textLength="440.58" lengthAdjust="spacingAndGlyphs">EMPLOYMENT CONTRACT</text><text x="375.42" y="869.00" font-size="29" font-weight="normal" font-style="normal" fill="#0d0d0d" stroke="#0d0d0d" stroke-width="0.4" textLength="373.78" lengthAdjust="spacingAndGlyphs">This is an employment contract</text><text x="375.50" y="933.50" font-size="29" font-weight="bold" font-style="normal" fill="#0d0d0d" textLength="131.72" lengthAdjust="spacingAndGlyphs">BETWEEN</text><text x="513.36" y="933.50" font-size="29" font-weight="normal" font-style="normal" fill="#0d0d0d" stroke="#0d0d0d" stroke-width="0.4" textLength="223.61" lengthAdjust="spacingAndGlyphs">{{Company_name}}</text><text x="745.47" y="933.50" font-size="29" font-weight="bold" font-style="normal" fill="#0d0d0d" textLength="160.94" lengthAdjust="spacingAndGlyphs">the Employer</text><text x="377.00" y="997.60" font-size="29" font-weight="normal" font-style="normal" fill="#0d0d0d" stroke="#0d0d0d" stroke-width="0.4" textLength="59.82" lengthAdjust="spacingAndGlyphs">AND</text><text x="376.54" y="1059.40" font-size="29" font-weight="normal" font-style="normal" fill="#0d0d0d" stroke="#0d0d0d" stroke-width="0.4" textLength="264.30" lengthAdjust="spacingAndGlyphs">{{employee_fullname}}</text><text x="648.67" y="1059.40" font-size="29" font-weight="bold" font-style="normal" fill="#0d0d0d" textLength="165.56" lengthAdjust="spacingAndGlyphs">the Employee</text><text x="375.25" y="1125.80" font-size="29" font-weight="bold" font-style="normal" fill="#0d0d0d" textLength="16.13" lengthAdjust="spacingAndGlyphs">1</text><text x="464.39" y="1125.80" font-size="29" font-weight="bold" font-style="normal" fill="#0d0d0d" textLength="266.54" lengthAdjust="spacingAndGlyphs">Commencement Date</text><text x="464.82" y="1174.30" font-size="29" font-weight="normal" font-style="normal" fill="#0d0d0d" stroke="#0d0d0d" stroke-width="0.4" textLength="917.61" lengthAdjust="spacingAndGlyphs">This employment contract commences on the &lt;insert commencement date&gt;.</text><text x="376.00" y="1237.60" font-size="29" font-weight="bold" font-style="normal" fill="#0d0d0d" textLength="16.13" lengthAdjust="spacingAndGlyphs">2</text><text x="463.72" y="1237.60" font-size="29" font-weight="bold" font-style="normal" fill="#0d0d0d" textLength="278.51" lengthAdjust="spacingAndGlyphs">Probation (See Note 1)</text><text x="375.68" y="1285.80" font-size="29" font-weight="normal" font-style="normal" fill="#0d0d0d" stroke="#0d0d0d" stroke-width="0.4" textLength="38.70" lengthAdjust="spacingAndGlyphs">2.1</text><text x="463.13" y="1285.80" font-size="29" font-weight="normal" font-style="normal" fill="#0d0d0d" stroke="#0d0d0d" stroke-width="0.4" textLength="979.63" lengthAdjust="spacingAndGlyphs">Employment is subject to the satisfactory completion of a three-month probation</text><text x="463.56" y="1335.50" font-size="29" font-weight="normal" font-style="normal" fill="#0d0d0d" stroke="#0d0d0d" stroke-width="0.4" textLength="86.94" lengthAdjust="spacingAndGlyphs">period.</text><text x="223.01" y="415.80" font-size="20" font-weight="normal" font-style="normal" fill="#242424" stroke="#242424" stroke-width="0.65" textLength="206.02" lengthAdjust="spacingAndGlyphs">Summary By Copilot</text><text x="1448.56" y="418.00" font-size="21" font-weight="normal" font-style="normal" fill="#ffffff" stroke="#ffffff" stroke-width="0.6" textLength="90.91" lengthAdjust="spacingAndGlyphs">Generate</text><text x="1799.00" y="310.50" font-size="31" font-weight="normal" font-style="normal" fill="#242424" stroke="#242424" stroke-width="0.6" textLength="331.11" lengthAdjust="spacingAndGlyphs">Agrello for Word Add-in</text><text x="1860.96" y="405.80" font-size="24" font-weight="normal" font-style="normal" fill="#6b7280" textLength="168.70" lengthAdjust="spacingAndGlyphs">Not connected</text><text x="1828.78" y="530.60" font-size="25" font-weight="normal" font-style="normal" fill="#6b7280" stroke="#6b7280" stroke-width="0.75" textLength="170.15" lengthAdjust="spacingAndGlyphs">CREDENTIALS</text><text x="1828.73" y="590.30" font-size="25" font-weight="normal" font-style="normal" fill="#1f1f1f" textLength="97.53" lengthAdjust="spacingAndGlyphs">Client ID</text><text x="1854.44" y="648.60" font-size="29" font-weight="normal" font-style="normal" fill="#767676" textLength="251.55" lengthAdjust="spacingAndGlyphs">Enter your Client ID</text><text x="1828.71" y="718.50" font-size="25" font-weight="normal" font-style="normal" fill="#1f1f1f" textLength="147.54" lengthAdjust="spacingAndGlyphs">Client Secret</text><text x="1854.43" y="776.80" font-size="29" font-weight="normal" font-style="normal" fill="#767676" textLength="307.81" lengthAdjust="spacingAndGlyphs">Enter your Client Secret</text><text x="2248.12" y="863.80" font-size="29" font-weight="normal" font-style="normal" fill="#c2c2c2" stroke="#c2c2c2" stroke-width="0.8" textLength="114.03" lengthAdjust="spacingAndGlyphs">Connect</text></svg></body></html>
